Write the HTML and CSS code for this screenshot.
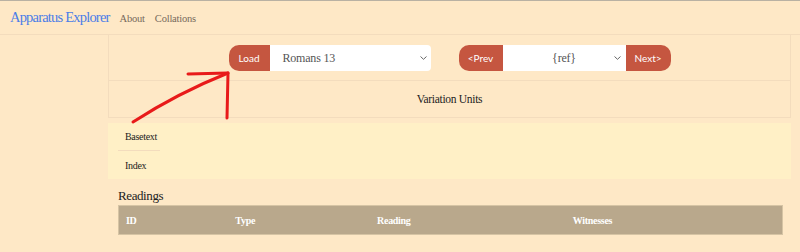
FILE: index.html
```html
<!DOCTYPE html>
<html>
<head>
<meta charset="utf-8">
<link rel="stylesheet" href="styles.css">
</head>
<body>
<nav class="navbar">
  <span class="brand">Apparatus Explorer</span>
  <span class="nav-link">About</span>
  <span class="nav-link">Collations</span>
</nav>
<main class="main">
  <section class="card">
    <div class="controls">
      <div class="group">
        <span class="btn btn-left">Load</span>
        <div class="select select-wide select-right">
          <span class="select-text">Romans 13</span>
          <svg class="chev" width="7" height="4" viewBox="0 0 7 4"><path d="M0.5 0.5 L3.5 3.3 L6.5 0.5" fill="none" stroke="#666" stroke-width="1"/></svg>
        </div>
      </div>
      <div class="group">
        <span class="btn btn-left btn-prev">&lt;Prev</span>
        <div class="select select-ref">
          <span class="select-text center">{ref}</span>
          <svg class="chev" width="7" height="4" viewBox="0 0 7 4"><path d="M0.5 0.5 L3.5 3.3 L6.5 0.5" fill="none" stroke="#666" stroke-width="1"/></svg>
        </div>
        <span class="btn btn-right btn-next">Next&gt;</span>
      </div>
    </div>
    <div class="vu">Variation Units</div>
  </section>
  <section class="panel">
    <ul class="tabs">
      <li class="tab first">Basetext</li>
      <li class="tab">Index</li>
    </ul>
  </section>
  <section class="readings">
    <h2 class="readings-title">Readings</h2>
    <table class="table">
      <thead>
        <tr>
          <th class="c1">ID</th>
          <th class="c2">Type</th>
          <th class="c3">Reading</th>
          <th class="c4">Witnesses</th>
        </tr>
      </thead>
    </table>
  </section>
</main>
<svg class="arrow" width="800" height="252" viewBox="0 0 800 252">
  <path d="M133 121 Q178 92 228 72" fill="none" stroke="#e81a1a" stroke-width="3" stroke-linecap="round"/>
  <path d="M188 73 L228 72 L227 117" fill="none" stroke="#e81a1a" stroke-width="3" stroke-linecap="round" stroke-linejoin="round"/>
</svg>
</body>
</html>
```
FILE: styles.css
```css
* { box-sizing: border-box; }
html, body { margin: 0; padding: 0; }
body {
  background: #fee8c6;
  border-top: 1px solid #b9b1a3;
  font-family: "Liberation Serif", serif;
  color: #222;
  width: 800px;
  height: 252px;
  overflow: hidden;
  position: relative;
}
.navbar {
  height: 34px;
  display: flex;
  align-items: center;
  padding-left: 10px;
  border-bottom: 1px solid #f3dcbd;
}
.brand {
  font-size: 14.5px;
  color: #4b7de8;
  letter-spacing: -0.8px;
  margin-right: 10px;
}
.nav-link {
  font-size: 10.5px;
  color: #776a5c;
  margin-right: 10px;
  letter-spacing: -0.2px;
  margin-top: 1px;
}
.main {
  margin-left: 108px;
  width: 683px;
}
.card {
  border: 1px solid #f3dcbd;
  border-top: none;
}
.controls {
  height: 46px;
  display: flex;
  justify-content: center;
  align-items: center;
  gap: 28px;
  border-bottom: 1px solid #f3dcbd;
  padding-top: 1px;
}
.group {
  display: flex;
  height: 26px;
}
.btn {
  background: #c55640;
  color: #fff;
  font-family: Lato, sans-serif;
  font-size: 10px;
  display: flex;
  align-items: center;
  justify-content: center;
}
.btn-left { border-radius: 10px 0 0 10px; width: 41px; }
.btn-prev { width: 44px; }
.btn-right { border-radius: 0 10px 10px 0; }
.btn-next { width: 45px; }
.select {
  background: #fff;
  display: flex;
  align-items: center;
  position: relative;
  color: #555;
  font-size: 12px;
}
.select-wide { width: 161px; padding-left: 13px; }
.select-right { border-radius: 0 4px 4px 0; }
.select-ref { width: 123px; justify-content: center; }
.select-text { letter-spacing: -0.2px; }
.chev { position: absolute; right: 4px; top: 11px; }
.select-ref .chev { right: 5px; }
.vu {
  height: 36px;
  display: flex;
  align-items: center;
  justify-content: center;
  font-size: 11.5px;
  letter-spacing: -0.3px;
  padding-bottom: 1px;
}
.panel {
  margin-top: 5px;
  background: #fff0c6;
  height: 56px;
  padding-left: 10px;
}
.tabs {
  list-style: none;
  margin: 0;
  padding: 0;
  width: 42px;
}
.tab {
  height: 28px;
  display: flex;
  align-items: center;
  padding-left: 7px;
  font-size: 10px;
  letter-spacing: -0.3px;
  color: #222;
}
.tab.first {
  border-bottom: 1px solid #f3dcbd;
}
.readings { padding-left: 10px; }
.readings-title {
  margin: 0;
  font-weight: normal;
  font-size: 13px;
  letter-spacing: -0.4px;
  height: 26px;
  display: flex;
  align-items: center;
  padding-top: 8px;
}
.table {
  border-collapse: collapse;
  width: 665px;
  background: #b9a88c;
  border: 1px solid #d6c4a4;
}
.table th {
  height: 29px;
  text-align: left;
  color: #fff;
  font-weight: bold;
  font-size: 10px;
  letter-spacing: -0.3px;
  padding: 0 0 0 7px;
}
.c1 { width: 110px; }
.c2 { width: 142px; }
.c3 { width: 196px; }
.c4 { width: 217px; }
.arrow {
  position: absolute;
  left: 0;
  top: 0;
  pointer-events: none;
}
```
